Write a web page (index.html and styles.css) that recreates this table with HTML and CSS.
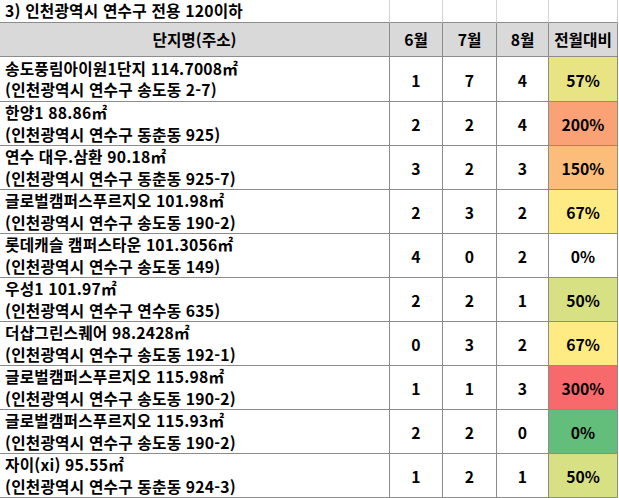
FILE: index.html
```html
<!DOCTYPE html>
<html lang="ko">
<head>
<meta charset="utf-8">
<link rel="stylesheet" href="styles.css">
</head>
<body>
<div class="sheet">
  <div class="c title first">3) 인천광역시 연수구 전용 120이하</div>
  <div class="c title"></div>
  <div class="c title"></div>
  <div class="c title"></div>
  <div class="c title last"></div>

  <div class="c head">단지명(주소)</div>
  <div class="c head">6월</div>
  <div class="c head">7월</div>
  <div class="c head">8월</div>
  <div class="c head">전월대비</div>

  <div class="c name r1">송도풍림아이원1단지 114.7008㎡<br>(인천광역시 연수구 송도동 2-7)</div>
  <div class="c num r1">1</div><div class="c num r1">7</div><div class="c num r1">4</div>
  <div class="c num r1 p57">57%</div>

  <div class="c name">한양1 88.86㎡<br>(인천광역시 연수구 동춘동 925)</div>
  <div class="c num">2</div><div class="c num">2</div><div class="c num">4</div>
  <div class="c num p200">200%</div>

  <div class="c name">연수 대우.삼환 90.18㎡<br>(인천광역시 연수구 동춘동 925-7)</div>
  <div class="c num">3</div><div class="c num">2</div><div class="c num">3</div>
  <div class="c num p150">150%</div>

  <div class="c name">글로벌캠퍼스푸르지오 101.98㎡<br>(인천광역시 연수구 송도동 190-2)</div>
  <div class="c num">2</div><div class="c num">3</div><div class="c num">2</div>
  <div class="c num p67">67%</div>

  <div class="c name">롯데캐슬 캠퍼스타운 101.3056㎡<br>(인천광역시 연수구 송도동 149)</div>
  <div class="c num">4</div><div class="c num">0</div><div class="c num">2</div>
  <div class="c num">0%</div>

  <div class="c name">우성1 101.97㎡<br>(인천광역시 연수구 연수동 635)</div>
  <div class="c num">2</div><div class="c num">2</div><div class="c num">1</div>
  <div class="c num p50">50%</div>

  <div class="c name">더샵그린스퀘어 98.2428㎡<br>(인천광역시 연수구 송도동 192-1)</div>
  <div class="c num">0</div><div class="c num">3</div><div class="c num">2</div>
  <div class="c num p67">67%</div>

  <div class="c name">글로벌캠퍼스푸르지오 115.98㎡<br>(인천광역시 연수구 송도동 190-2)</div>
  <div class="c num">1</div><div class="c num">1</div><div class="c num">3</div>
  <div class="c num p300">300%</div>

  <div class="c name">글로벌캠퍼스푸르지오 115.93㎡<br>(인천광역시 연수구 송도동 190-2)</div>
  <div class="c num">2</div><div class="c num">2</div><div class="c num">0</div>
  <div class="c num p0">0%</div>

  <div class="c name">자이(xi) 95.55㎡<br>(인천광역시 연수구 동춘동 924-3)</div>
  <div class="c num">1</div><div class="c num">2</div><div class="c num">1</div>
  <div class="c num p50">50%</div>
</div>
</body>
</html>
```

FILE: styles.css
```css
html, body {
  margin: 0;
  padding: 0;
  background: #ffffff;
}
body {
  font-family: "Noto Sans CJK KR", "Noto Sans", sans-serif;
  font-weight: 700;
  font-size: 15.7px;
  color: #000000;
}
.sheet {
  display: grid;
  grid-template-columns: 390px 53px 54px 52px 69px;
  grid-auto-rows: 44px;
  grid-template-rows: 23px 34px 45px;
  width: 618px;
}
.c {
  box-sizing: border-box;
  border-right: 1px solid #8c8c8c;
  border-bottom: 1px solid #8c8c8c;
  display: flex;
  align-items: center;
  white-space: nowrap;
}
.title {
  border-right-color: #d4d4d4;
  padding-left: 5px;
  line-height: 22px;
  letter-spacing: 0.2px;
}
.title.first {
  overflow: visible;
}
.head {
  background: #d9d9d9;
  justify-content: center;
  line-height: 20px;
  padding-top: 1px;
}
.name {
  padding-left: 5px;
  line-height: 21.5px;
  padding-top: 0;
  letter-spacing: 0.2px;
}
.num {
  justify-content: center;
  padding-top: 2px;
}
.p57 { background: #e8e483; }
.p200 { background: #fba176; }
.p150 { background: #fcbd7b; }
.p67 { background: #ffeb84; }
.p50 { background: #d7e082; }
.p300 { background: #f8696b; }
.p0 { background: #63be7b; }
```
